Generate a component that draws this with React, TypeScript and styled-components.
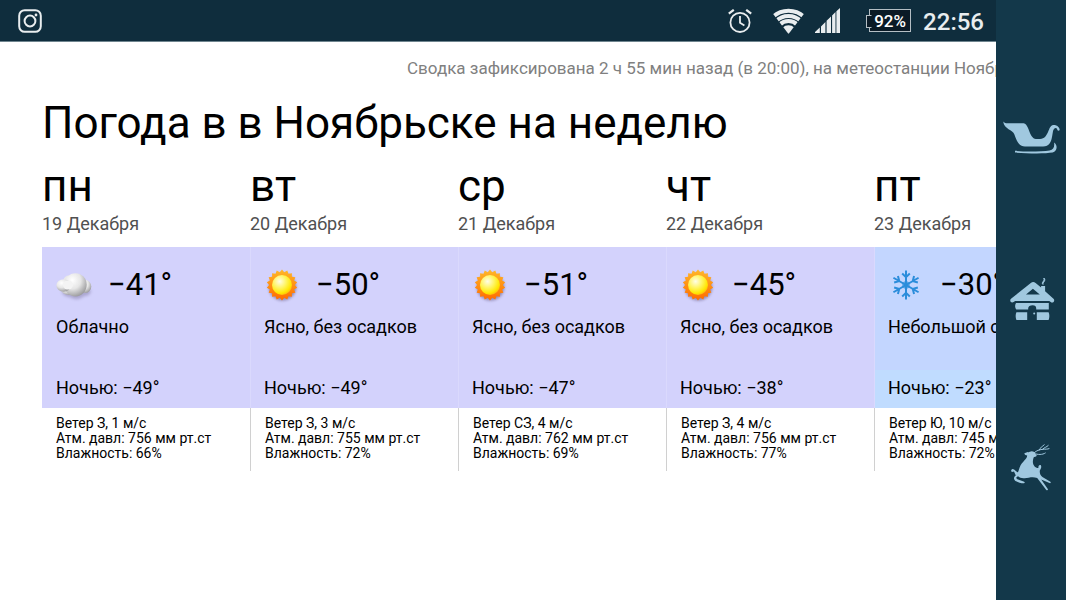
import React from "react";
import styled, { createGlobalStyle } from "styled-components";

const GlobalStyle = createGlobalStyle`
  * { box-sizing: border-box; }
  body {
    margin: 0;
    background: #fff;
    color: #000;
    font-family: Roboto, "Noto Sans", sans-serif;
  }
`;

const Screen = styled.div`
  display: flex;
  min-height: 100vh;
`;

const Page = styled.div`
  flex: 1;
  min-width: 0;
  overflow: hidden;
`;

const StatusBar = styled.header`
  display: flex;
  align-items: center;
  justify-content: space-between;
  height: 42px;
  padding: 0 12px 0 18px;
  background: #0f2d3d;
  border-bottom: 1px solid #6f858f;
  color: #e9edef;

  svg { display: block; }
`;

const StatusIcons = styled.div`
  display: flex;
  align-items: center;
`;

const Slot = styled.span<{ $gap: number }>`
  margin-right: ${(p) => p.$gap}px;
`;

const Battery = styled.span`
  position: relative;
  display: flex;
  align-items: center;
  justify-content: center;
  width: 42px;
  height: 23px;
  margin-right: 12px;
  border: 1px solid #b4bec4;
  background: #0a1a26;
  color: #fff;
  font-size: 17px;
  font-weight: 500;

  &::before {
    content: "";
    position: absolute;
    left: -4px;
    top: 5px;
    width: 4px;
    height: 11px;
    border: 1px solid #b4bec4;
    border-right-color: #0a1a26;
    background: #0a1a26;
  }
`;

const Clock = styled.time`
  padding-top: 2px;
  font-size: 24px;
  font-weight: 500;
  line-height: 28px;
`;

const Content = styled.main`
  padding: 16px 0 0 42px;
`;

const Updated = styled.p`
  margin: 0;
  padding-left: 365px;
  color: #808080;
  font-size: 17px;
  line-height: 20px;
  white-space: nowrap;
`;

const Title = styled.h1`
  margin: 17px 0 0;
  font-size: 44px;
  font-weight: 400;
  line-height: 56px;
  white-space: nowrap;
`;

const Forecast = styled.table`
  width: 1040px;
  margin-top: 8px;
  table-layout: fixed;
  border-collapse: separate;
  border-spacing: 0;
`;

const DayHead = styled.th`
  height: 88px;
  padding: 0;
  font-weight: 400;
  text-align: left;
  vertical-align: top;
`;

const DayName = styled.span`
  display: block;
  font-size: 44px;
  line-height: 54px;
`;

const DayDate = styled.span`
  display: block;
  color: #505050;
  font-size: 18px;
  line-height: 22px;
`;

const Sky = styled.td<{ $color: string }>`
  height: 123px;
  padding: 18px 0 0 14px;
  background: ${(p) => p.$color};
  font-size: 18px;
  line-height: 24px;
  vertical-align: top;
  white-space: nowrap;

  & + & { border-left: 1px solid #dad9fd; padding-left: 13px; }
`;

const Now = styled.div`
  display: flex;
  align-items: center;
  gap: 14px;
  height: 40px;
  margin-bottom: 10px;
  font-size: 31px;

  svg { flex: none; overflow: visible; }
`;

const Night = styled.td<{ $color: string }>`
  height: 38px;
  padding: 0 0 2px 14px;
  background: ${(p) => p.$color};
  font-size: 18px;
  line-height: 24px;
  white-space: nowrap;

  & + & { border-left: 1px solid #dad9fd; padding-left: 13px; }
`;

const Details = styled.td`
  height: 63px;
  padding: 8px 0 0 14px;
  font-size: 14px;
  line-height: 15px;
  vertical-align: top;
  white-space: nowrap;

  & + & { border-left: 1px solid #d0d0d0; }
`;

const SideNav = styled.nav`
  display: flex;
  flex: 0 0 70px;
  flex-direction: column;
  align-items: center;
  justify-content: space-between;
  padding: 102px 0;
  background: #13384a;
`;

const NavButton = styled.button`
  width: 70px;
  height: 70px;
  padding: 0;
  border: 0;
  background: none;
  color: #a0c8df;
  cursor: pointer;

  svg { display: block; }
`;

const Instagram = () => (
  <svg width="24" height="24" viewBox="0 0 24 24" fill="none" stroke="#e9edef" strokeWidth="2">
    <rect x="1.2" y="1.2" width="21.6" height="21.6" rx="5.5" />
    <circle cx="12" cy="12" r="5.4" />
    <circle cx="18" cy="6" r="1.4" fill="#e9edef" stroke="none" />
  </svg>
);

const Alarm = () => (
  <svg width="24" height="24" viewBox="0 0 24 24" fill="none" stroke="#e9edef" strokeWidth="1.8">
    <circle cx="12" cy="13.4" r="9.6" />
    <path d="M12 7v6.8l4.4 2.6" />
    <path d="M.8 4.6 5.8.8M23.2 4.6l-5-3.8" strokeWidth="2.2" />
  </svg>
);

const Wifi = () => (
  <svg width="33" height="26" viewBox="0 0 33 26">
    <defs>
      <clipPath id="fan"><path d="M-2 2 16.5 26 35 2V-2H-2Z" /></clipPath>
    </defs>
    <g clipPath="url(#fan)" fill="none" stroke="#e9edef" strokeWidth="4">
      <circle cx="16.5" cy="25.5" r="22.8" />
      <circle cx="16.5" cy="25.5" r="17.6" />
      <circle cx="16.5" cy="25.5" r="12.4" />
      <circle cx="16.5" cy="25.5" r="4" strokeWidth="8.6" />
    </g>
  </svg>
);

const Signal = () => (
  <svg width="25" height="25" viewBox="0 0 25 25" fill="#e9edef">
    <path d="M0 25v-1l4.8-4.6V25ZM6 25v-6.6l4.4-4.4V25ZM11.6 25V12.8L16 8.6V25ZM17.1 25V7.4l3.4-3.4V25ZM21.4 25V3.3L25 0v25Z" />
  </svg>
);

const Sleigh = () => (
  <svg width="70" height="70" viewBox="0 0 70 70" fill="currentColor">
    <path d="M7.2 19.5c1 1.5 3 1.9 5.2 1.8h15.2c4.2 1 4.8 7 7.6 12.1 2 3 3.2 3.5 7 3.5 5.5 0 7.1-1.7 9.1-5.5 1.9-3.5 2.4-8.1 6.2-8.5 3.2-.2 6.1 2 6.2 5-1 1.6-2.8.5-2.5-1-1.6-2.2-3.7-.2-4.2 2.4-1 5-1 10.2-4.3 13.2-2.3 2-4.7 2.1-7.7 2.1H29c-7-.4-8.4-6.6-10.6-12.2C16.8 27.6 8.2 27.5 7.2 19.5Z" />
    <path d="M19 48.8c12 1 27 .6 34.5-.4 4-.6 5.2-3 4.6-8 4 3 3 9-1.5 10.2-7 1.2-25 1-37.6 0Z" />
  </svg>
);

const House = () => (
  <svg width="70" height="70" viewBox="0 0 70 70" fill="currentColor">
    <path fillRule="evenodd" d="M34.8 18c1.6-1.2 3.2-1.2 4.8 0l5.5 4.5V21h4v5.2l8.4 7.6c2 2-.6 4.9-2.8 3.2l-1.4-1.1H19.2l-1.6 1.1c-2.3 1.5-4.6-1.4-2.6-3.2ZM30 29.4h13.8l-6.9-5.6Z" />
    <path d="M20 37.9h32.8v6.6H40.2V43.3c0-2-1.2-3.1-3.6-3.1s-4.4 1.1-4.4 3.1v1.2H20.3c-1.5-1.8-1.5-4.8-.3-6.6ZM20.4 47.2h10.8v7.8H20.4c-1-2.2-1-5.6 0-7.8ZM40.8 47.2h11.8c1 2.2 1 5.6 0 7.8H40.8Z" />
    <circle cx="38.2" cy="48.5" r="1" />
    <path d="M47 19.4c-2.4-2.2 2.4-3.1.8-6.4 2.8 2.6-1.2 4-.8 6.4Z" stroke="currentColor" />
  </svg>
);

const Deer = () => (
  <svg width="70" height="70" viewBox="0 -7 70 70" fill="currentColor">
    <path d="M28.2 18.4c2-1.2 4-.9 5.6-1.6 2.2-1.4 4.2-.5 5.4 1.6l1.6 2.4c-1 1.2-2.4 1-3.2 1.6-1.2 3.6-1 7 1 9 1.4 1.3 2.6 1.6 3.8 1.7-.2-2 .6-3.6 2.2-3 1.2 1.2.6 3.6-.8 5.4-.2 2.6.4 4.4 2.6 6.4l8 4.8c.8.8.2 1.8-.9 1.4l-8.3-3.6 6.6 9.4c.6 1.4-.8 1.9-1.7.8l-8.9-11.8c-4.4-1.6-8.2-.3-12.6.3-3 .2-5-.4-6-1.6-2.6.1-3 1.2-1.2 2.6l6.2 2.2c1.4.4 1.6 1.7.2 1.9-3.4 0-6-1.2-8.4-2.4-2.2-1.8-1.6-4.3.4-5.5l-1.8-3.8-2 .5c-1.4-.4-1-2.8.6-3 2.2.1 3.2 2.6 5.2 3.2 1-1 1.2-4 2.8-7 2.6-4.4 6.4-6.4 6.6-9.9-1.2-.2-2.6-.8-3-2Z" />
    <path d="M38 18c3-2.8 5.4-3.2 8-3.6 3.4-.4 5.5 0 7.4-.9M43 15.4c1-3 3-3 5.4-6M46.5 14.4c2-2.2 4-2 6-4.2M38 18.4c4 1.4 8.3 1.6 11.6-.6" fill="none" stroke="currentColor" strokeWidth="1" />
  </svg>
);

const sunRays = Array.from({ length: 36 }, (_, i) => {
  const r = i % 2 ? 12.9 : 15.4;
  const a = (i * Math.PI) / 18;
  return `${(18 + r * Math.sin(a)).toFixed(2)},${(19 - r * Math.cos(a)).toFixed(2)}`;
}).join(" ");

const Sun = () => (
  <svg width="38" height="38" viewBox="0 0 38 38">
    <defs>
      <linearGradient id="rim" x1="0" y1="0" x2="0" y2="1">
        <stop offset="0" stopColor="#ffb829" />
        <stop offset="1" stopColor="#ff6b00" />
      </linearGradient>
      <radialGradient id="disc" cx=".38" cy=".32" r=".7">
        <stop offset="0" stopColor="#fffde8" />
        <stop offset=".5" stopColor="#fff45a" />
        <stop offset=".85" stopColor="#ffe600" />
        <stop offset="1" stopColor="#ffba10" />
      </radialGradient>
      <filter id="sunShade" x="-30%" y="-30%" width="160%" height="160%"><feGaussianBlur stdDeviation="1.4" /></filter>
    </defs>
    <circle cx="18.5" cy="21" r="13.6" fill="#62567e" opacity=".6" filter="url(#sunShade)" />
    <polygon points={sunRays} fill="url(#rim)" />
    <circle cx="18" cy="19" r="10" fill="url(#disc)" />
  </svg>
);

const Cloud = () => (
  <svg width="38" height="38" viewBox="0 0 38 38">
    <defs>
      <radialGradient id="puff" cx=".36" cy=".3" r=".75">
        <stop offset="0" stopColor="#fff" />
        <stop offset=".5" stopColor="#e6e6e6" />
        <stop offset="1" stopColor="#98989a" />
      </radialGradient>
      <filter id="cloudShade" x="-30%" y="-30%" width="160%" height="170%"><feGaussianBlur stdDeviation="1.5" /></filter>
    </defs>
    <path d="M6 24h29c0 5-4 6-7 6-4 4-10 4-14 1-4 0-8-2-8-7Z" fill="#62567e" opacity=".35" filter="url(#cloudShade)" />
    <ellipse cx="29.5" cy="20.5" rx="5.8" ry="6.5" fill="url(#puff)" />
    <ellipse cx="13" cy="14.5" rx="5.5" ry="5" fill="#e9e9e9" />
    <ellipse cx="13" cy="24" rx="7.5" ry="5" fill="url(#puff)" />
    <ellipse cx="19.5" cy="18.8" rx="11.2" ry="11.6" fill="url(#puff)" />
    <ellipse cx="7.6" cy="19.5" rx="7.2" ry="6.2" fill="url(#puff)" />
    <ellipse cx="12" cy="19" rx="5" ry="4.6" fill="#f4f4f4" />
  </svg>
);

const Snowflake = () => (
  <svg width="38" height="38" viewBox="0 0 38 38">
    <defs>
      <g id="arm" fill="none" stroke="#2b8ddb" strokeWidth="2">
        <path d="M18 19V4.5M14.2 7.5 18 11.2l3.8-3.7" />
      </g>
    </defs>
    <circle cx="18" cy="19" r="3.8" fill="#2b8ddb" opacity=".7" />
    {[0, 60, 120, 180, 240, 300].map((a) => (
      <use key={a} href="#arm" transform={`rotate(${a} 18 19)`} />
    ))}
  </svg>
);

const LILAC = "#d3d2fc";

const days = [
  { name: "пн", date: "19 Декабря", Icon: Cloud, temp: "−41°", sky: "Облачно", night: "−49°", wind: "З, 1", pressure: 756, humidity: 66, color: LILAC, nightColor: LILAC },
  { name: "вт", date: "20 Декабря", Icon: Sun, temp: "−50°", sky: "Ясно, без осадков", night: "−49°", wind: "З, 3", pressure: 755, humidity: 72, color: LILAC, nightColor: LILAC },
  { name: "ср", date: "21 Декабря", Icon: Sun, temp: "−51°", sky: "Ясно, без осадков", night: "−47°", wind: "СЗ, 4", pressure: 762, humidity: 69, color: LILAC, nightColor: LILAC },
  { name: "чт", date: "22 Декабря", Icon: Sun, temp: "−45°", sky: "Ясно, без осадков", night: "−38°", wind: "З, 4", pressure: 756, humidity: 77, color: LILAC, nightColor: LILAC },
  { name: "пт", date: "23 Декабря", Icon: Snowflake, temp: "−30°", sky: "Небольшой снег", night: "−23°", wind: "Ю, 10", pressure: 745, humidity: 72, color: "#c3d6ff", nightColor: "#c0dcff" },
];

export default function App() {
  return (
    <>
      <GlobalStyle />
      <Screen>
        <Page>
          <StatusBar>
            <Instagram />
            <StatusIcons>
              <Slot $gap={20}><Alarm /></Slot>
              <Slot $gap={10}><Wifi /></Slot>
              <Slot $gap={29}><Signal /></Slot>
              <Battery>92%</Battery>
              <Clock>22:56</Clock>
            </StatusIcons>
          </StatusBar>
          <Content>
            <Updated>Сводка зафиксирована 2 ч 55 мин назад (в 20:00), на метеостанции Ноябрьск</Updated>
            <Title>Погода в в Ноябрьске на неделю</Title>
            <Forecast>
              <thead>
                <tr>
                  {days.map((d) => (
                    <DayHead key={d.name} scope="col">
                      <DayName>{d.name}</DayName>
                      <DayDate>{d.date}</DayDate>
                    </DayHead>
                  ))}
                </tr>
              </thead>
              <tbody>
                <tr>
                  {days.map((d) => (
                    <Sky key={d.name} $color={d.color}>
                      <Now><d.Icon />{d.temp}</Now>
                      {d.sky}
                    </Sky>
                  ))}
                </tr>
                <tr>
                  {days.map((d) => (
                    <Night key={d.name} $color={d.nightColor}>Ночью: {d.night}</Night>
                  ))}
                </tr>
                <tr>
                  {days.map((d) => (
                    <Details key={d.name}>
                      <div>Ветер {d.wind} м/с</div>
                      <div>Атм. давл: {d.pressure} мм рт.ст</div>
                      <div>Влажность: {d.humidity}%</div>
                    </Details>
                  ))}
                </tr>
              </tbody>
            </Forecast>
          </Content>
        </Page>
        <SideNav>
          <NavButton aria-label="Недавние"><Sleigh /></NavButton>
          <NavButton aria-label="Домой"><House /></NavButton>
          <NavButton aria-label="Назад"><Deer /></NavButton>
        </SideNav>
      </Screen>
    </>
  );
}
